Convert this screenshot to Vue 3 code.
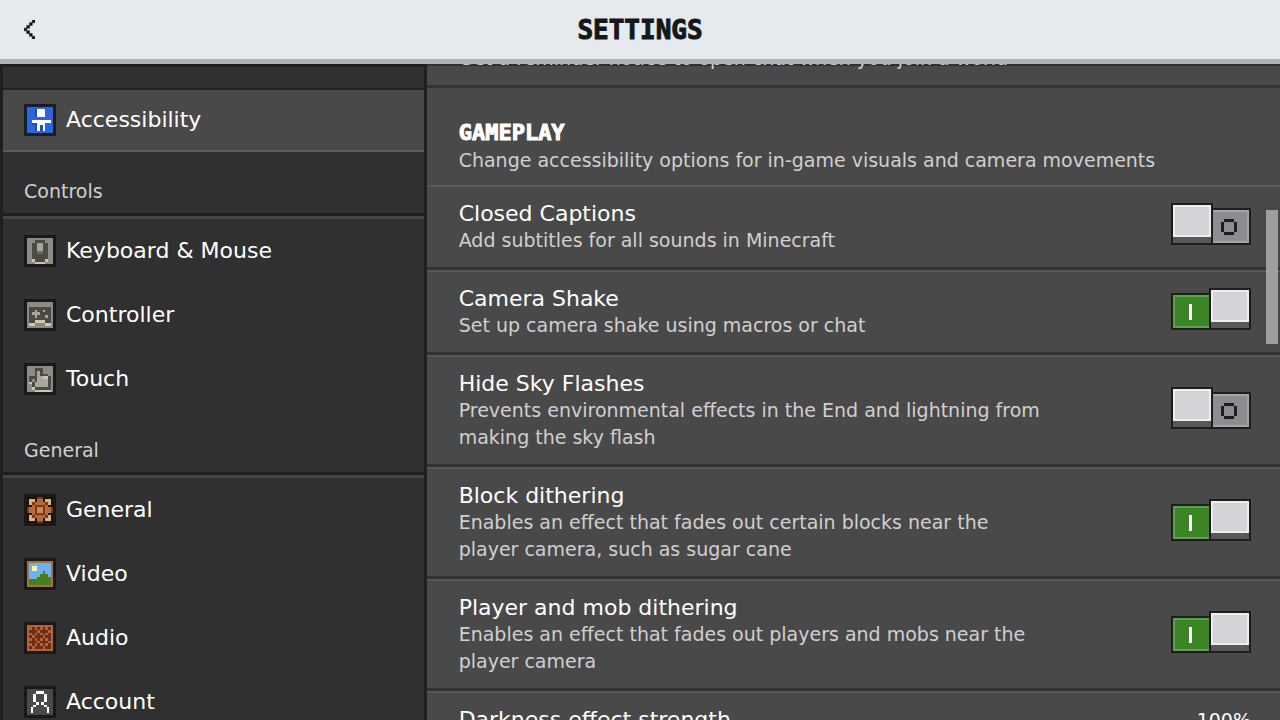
<script setup>
import { reactive } from 'vue'

const navGroups = [
  { title: 'Controls', items: [
    { label: 'Keyboard & Mouse', icon: 'mouse' },
    { label: 'Controller', icon: 'pad' },
    { label: 'Touch', icon: 'touch' }
  ] },
  { title: 'General', items: [
    { label: 'General', icon: 'gear' },
    { label: 'Video', icon: 'video' },
    { label: 'Audio', icon: 'audio' },
    { label: 'Account', icon: 'account' }
  ] }
]

const options = reactive([
  { id: 'captions', title: 'Closed Captions', text: 'Add subtitles for all sounds in Minecraft', on: false },
  { id: 'shake', title: 'Camera Shake', text: 'Set up camera shake using macros or chat', on: true },
  { id: 'flashes', title: 'Hide Sky Flashes', text: 'Prevents environmental effects in the End and lightning from making the sky flash', on: false },
  { id: 'blocks', title: 'Block dithering', text: 'Enables an effect that fades out certain blocks near the player camera, such as sugar cane', on: true },
  { id: 'mobs', title: 'Player and mob dithering', text: 'Enables an effect that fades out players and mobs near the player camera', on: true }
])

// Each icon is a 10x10 pixel map inside a one-unit dark frame.
const palette = {
  g: '#8b8a85', d: '#4b4a43', l: '#a9a79c', c: '#cfc6ac', m: '#6b6a62',
  b: '#2b66e0', n: '#1f4fbd', w: '#ffffff',
  k: '#17130c', o: '#b9693a', r: '#7a3a1b', y: '#dcb377', t: '#c58a55',
  f: '#a8703a', s: '#6db2f5', u: '#fbf2a4', h: '#4a7d1c', a: '#b5623c', e: '#6b2f15', q: '#494949'
}
const maps = {
  access: ['bbbbbbbbbb', 'bbbnwwwbbb', 'bbbnwwwbbb', 'bbbnwwwbbb', 'bbbbbbbbbb', 'bbwwwwwwwb', 'bbnnwwwbbb', 'bbbnwnwbbb', 'bbbnwnwbbb', 'bbbbbbbbbb'],
  mouse: ['gggggggggg', 'gggddddggg', 'ggddllddgg', 'ggddllddgg', 'ggddllddgg', 'ggddmmddgg', 'ggddddddgg', 'ggddddddgg', 'ggcddddcgg', 'gggccccggg'],
  pad: ['gggggggggg', 'gggggggggg', 'gddddddddg', 'gddlddlddg', 'gdlllddddg', 'gddldddldg', 'gddddddddg', 'gddccccddg', 'gccggggccg', 'gggggggggg'],
  touch: ['gggggggggg', 'gggdddgggg', 'gggdldgggg', 'gggdldddgg', 'gdddllccdg', 'gdgdlllldg', 'gcdllllldg', 'ggdllllldg', 'ggcddddddg', 'gggccccccg'],
  gear: ['kkkkrrkkkk', 'kyykookyyk', 'kyrooooryk', 'kkorrrrokk', 'roorttroor', 'roorttroor', 'kkorrrrokk', 'kyrooooryk', 'kyykookyyk', 'kkkkrrkkkk'],
  video: ['ffffffffff', 'fssssssssf', 'fsuussssSf', 'fsuussssSf', 'fssssshssf', 'fsssshhhsf', 'fssshhhhhf', 'fhhhhhhhhf', 'fhhhhhhhhf', 'ffffffffff'],
  audio: ['aaaaaaaaaa', 'aaeaeaeaea', 'aeeeaeeeaa', 'aaeaeaeaea', 'aeaeeeaeea', 'aaeaeaeaea', 'aeeeaeeeaa', 'aaeaeaeaea', 'aeaeeeaeea', 'aaaaaaaaaa'],
  account: Array(10).fill('qqqqqqqqqq')
}

function cells(name) {
  return maps[name].flatMap((row, y) =>
    [...row].map((ch, x) => ({ x: x + 1, y: y + 1, fill: palette[ch.toLowerCase()] }))
  )
}
const icons = Object.fromEntries(Object.keys(maps).map((name) => [name, cells(name)]))
</script>

<template>
  <div class="screen">
    <header class="topbar">
      <button class="back" type="button" aria-label="Back">
        <svg width="11" height="19" viewBox="0 0 4 7" aria-hidden="true">
          <path d="M3 0h1v1h-1zM2 1h1v1h-1zM1 2h1v1h-1zM0 3h1v1h-1zM1 4h1v1h-1zM2 5h1v1h-1zM3 6h1v1h-1z" fill="#111" stroke="#111" stroke-width=".2" />
        </svg>
      </button>
      <h1>SETTINGS</h1>
    </header>

    <div class="body">
      <nav class="sidebar" aria-label="Settings sections">
        <div class="strip"></div>
        <a class="item active" href="#accessibility" aria-current="page">
          <svg class="icon" viewBox="0 0 12 12" shape-rendering="crispEdges" aria-hidden="true">
            <rect width="12" height="12" fill="#1a1d20" />
            <rect v-for="(c, i) in icons.access" :key="i" :x="c.x" :y="c.y" width="1" height="1" :fill="c.fill" />
          </svg>
          <span>Accessibility</span>
        </a>
        <section v-for="group in navGroups" :key="group.title">
          <h2 class="group">{{ group.title }}</h2>
          <a v-for="item in group.items" :key="item.label" class="item" :href="'#' + item.icon">
            <svg class="icon" viewBox="0 0 12 12" shape-rendering="crispEdges" aria-hidden="true">
              <rect width="12" height="12" fill="#191919" />
              <rect v-for="(c, i) in icons[item.icon]" :key="i" :x="c.x" :y="c.y" width="1" height="1" :fill="c.fill" />
              <path v-if="item.icon === 'account'" fill="#fff" d="M4.5 2h3v1h-3zM3.5 3h1v3h-1zM7.5 3h1v3h-1zM4.5 6h1v1h-1zM6.5 6h1v1h-1zM3.5 7h1v1h-1zM7.5 7h1v1h-1zM2.5 8h1v2h-1zM8.5 8h1v2h-1z" />
            </svg>
            <span>{{ item.label }}</span>
          </a>
        </section>
      </nav>

      <main class="panel">
        <div class="content">
          <div class="row">
            <p>Get a reminder notice to open chat when you join a world</p>
          </div>
          <div class="intro">
            <h2>GAMEPLAY</h2>
            <p>Change accessibility options for in-game visuals and camera movements</p>
          </div>
          <div v-for="o in options" :key="o.id" class="row">
            <div class="copy">
              <h3><label :for="o.id">{{ o.title }}</label></h3>
              <p :id="o.id + '-text'">{{ o.text }}</p>
            </div>
            <span class="switch">
              <input :id="o.id" v-model="o.on" type="checkbox" role="switch" :aria-describedby="o.id + '-text'">
              <svg v-if="o.on" class="mark mark-on" viewBox="0 0 16 16" aria-hidden="true">
                <path d="M6 0h3v16h-3z" fill="#fff" />
              </svg>
              <svg v-else class="mark mark-off" viewBox="0 0 16 16" aria-hidden="true">
                <path d="M3 0h10v3h-10zM3 13h10v3h-10zM0 3h3v10h-3zM13 3h3v10h-3z" fill="#1e1e1f" />
              </svg>
            </span>
          </div>
          <div class="row">
            <h3>Darkness effect strength</h3>
            <span class="value">100%</span>
          </div>
        </div>
        <div class="thumb"></div>
      </main>
    </div>
  </div>
</template>

<style>
body {
  background: #303030;
}
</style>

<style scoped>
*,
*::before,
*::after {
  box-sizing: border-box;
}
.screen {
  height: 100vh;
  display: flex;
  flex-direction: column;
  overflow: hidden;
  font-family: "DejaVu Sans", sans-serif;
  color: #fff;
}
h1, h2, h3, p {
  margin: 0;
  font-weight: 400;
}
.topbar {
  flex: none;
  display: grid;
  grid-template-columns: 1fr auto 1fr;
  align-items: center;
  height: 64px;
  background: #e6e9ee;
  border-bottom: 5px solid #b1b1b3;
}
.back {
  justify-self: start;
  display: flex;
  padding: 12px 24px;
  border: 0;
  background: none;
  cursor: pointer;
}
h1 {
  font: 700 26px/32px "DejaVu Sans Mono", monospace;
  color: #141818;
  -webkit-text-stroke: 1px #141818;
}
.body {
  flex: 1;
  min-height: 0;
  display: grid;
  grid-template-columns: 1fr 2fr;
}
.sidebar {
  overflow: hidden;
  background: #303030;
  border: solid #1c201e;
  border-width: 3px 3px 0;
}
.strip {
  height: 23px;
  border-bottom: 2px solid #222;
}
.item {
  display: flex;
  align-items: center;
  gap: 10px;
  height: 64px;
  padding: 0 21px;
  font-size: 22px;
  line-height: 28px;
  color: #fff;
  text-decoration: none;
}
.item.active {
  height: 62px;
  background: #494949;
  border-bottom: 2px solid #5a5b5b;
}
.icon {
  flex: none;
  width: 32px;
  height: 32px;
}
.group {
  height: 67px;
  padding: 26px 21px 0;
  font-size: 19px;
  line-height: 27px;
  color: #d0d0d0;
  background: linear-gradient(#1e1e1f, #1e1e1f) 0 61px / 100% 3px no-repeat;
  border-bottom: 3px solid #464646;
}
.panel {
  position: relative;
  overflow: hidden;
  background: linear-gradient(#313131, #313131) 0 0 / 100% 2px no-repeat #494949;
}
.content {
  margin-top: -35px;
}
.row {
  display: flex;
  justify-content: space-between;
  align-items: center;
  padding: 14px 29px 13px 32px;
  border-top: 2px solid #595959;
  border-bottom: 3px solid #333;
}
.intro {
  padding: 31px 32px 11px;
}
.intro h2 {
  font: 700 22px/28px "DejaVu Sans Mono", monospace;
  -webkit-text-stroke: 1px #fff;
}
h3 {
  font-size: 22px;
  line-height: 26px;
}
p {
  font-size: 19px;
  line-height: 27px;
  color: #d0d0d0;
}
.copy {
  max-width: 588px;
}
.value {
  font-size: 19px;
  line-height: 26px;
}
.switch {
  position: relative;
  flex: none;
  width: 80px;
  height: 42px;
  margin-bottom: 7px;
}
.switch input {
  appearance: none;
  position: relative;
  display: block;
  width: 80px;
  height: 42px;
  margin: 0;
  cursor: pointer;
}
.switch input::before {
  content: "";
  position: absolute;
  inset: 5px 0 0;
  background: #8c8d90;
  border: 2px solid #1e1e1f;
  box-shadow: inset 0 0 0 2px #a3a4a7;
}
.switch input:checked::before {
  background: #3c8527;
  box-shadow: inset 0 0 0 2px #639d52;
}
.switch input::after {
  content: "";
  position: absolute;
  top: 0;
  left: 0;
  width: 42px;
  height: 42px;
  background: #d5d3d8;
  border: 2px solid #1e1e1f;
  box-shadow: inset 0 -6px #58585a, inset 0 -8px #eeedf0, inset 0 0 0 2px #eeedf0;
}
.switch input:checked::after {
  left: 38px;
}
.mark {
  position: absolute;
  top: 16px;
  width: 16px;
  height: 16px;
  pointer-events: none;
}
.mark-on {
  left: 12px;
}
.mark-off {
  left: 50px;
}
.thumb {
  position: absolute;
  top: 146px;
  right: 2px;
  width: 12px;
  height: 134px;
  background: #9d9e9d;
}
</style>
